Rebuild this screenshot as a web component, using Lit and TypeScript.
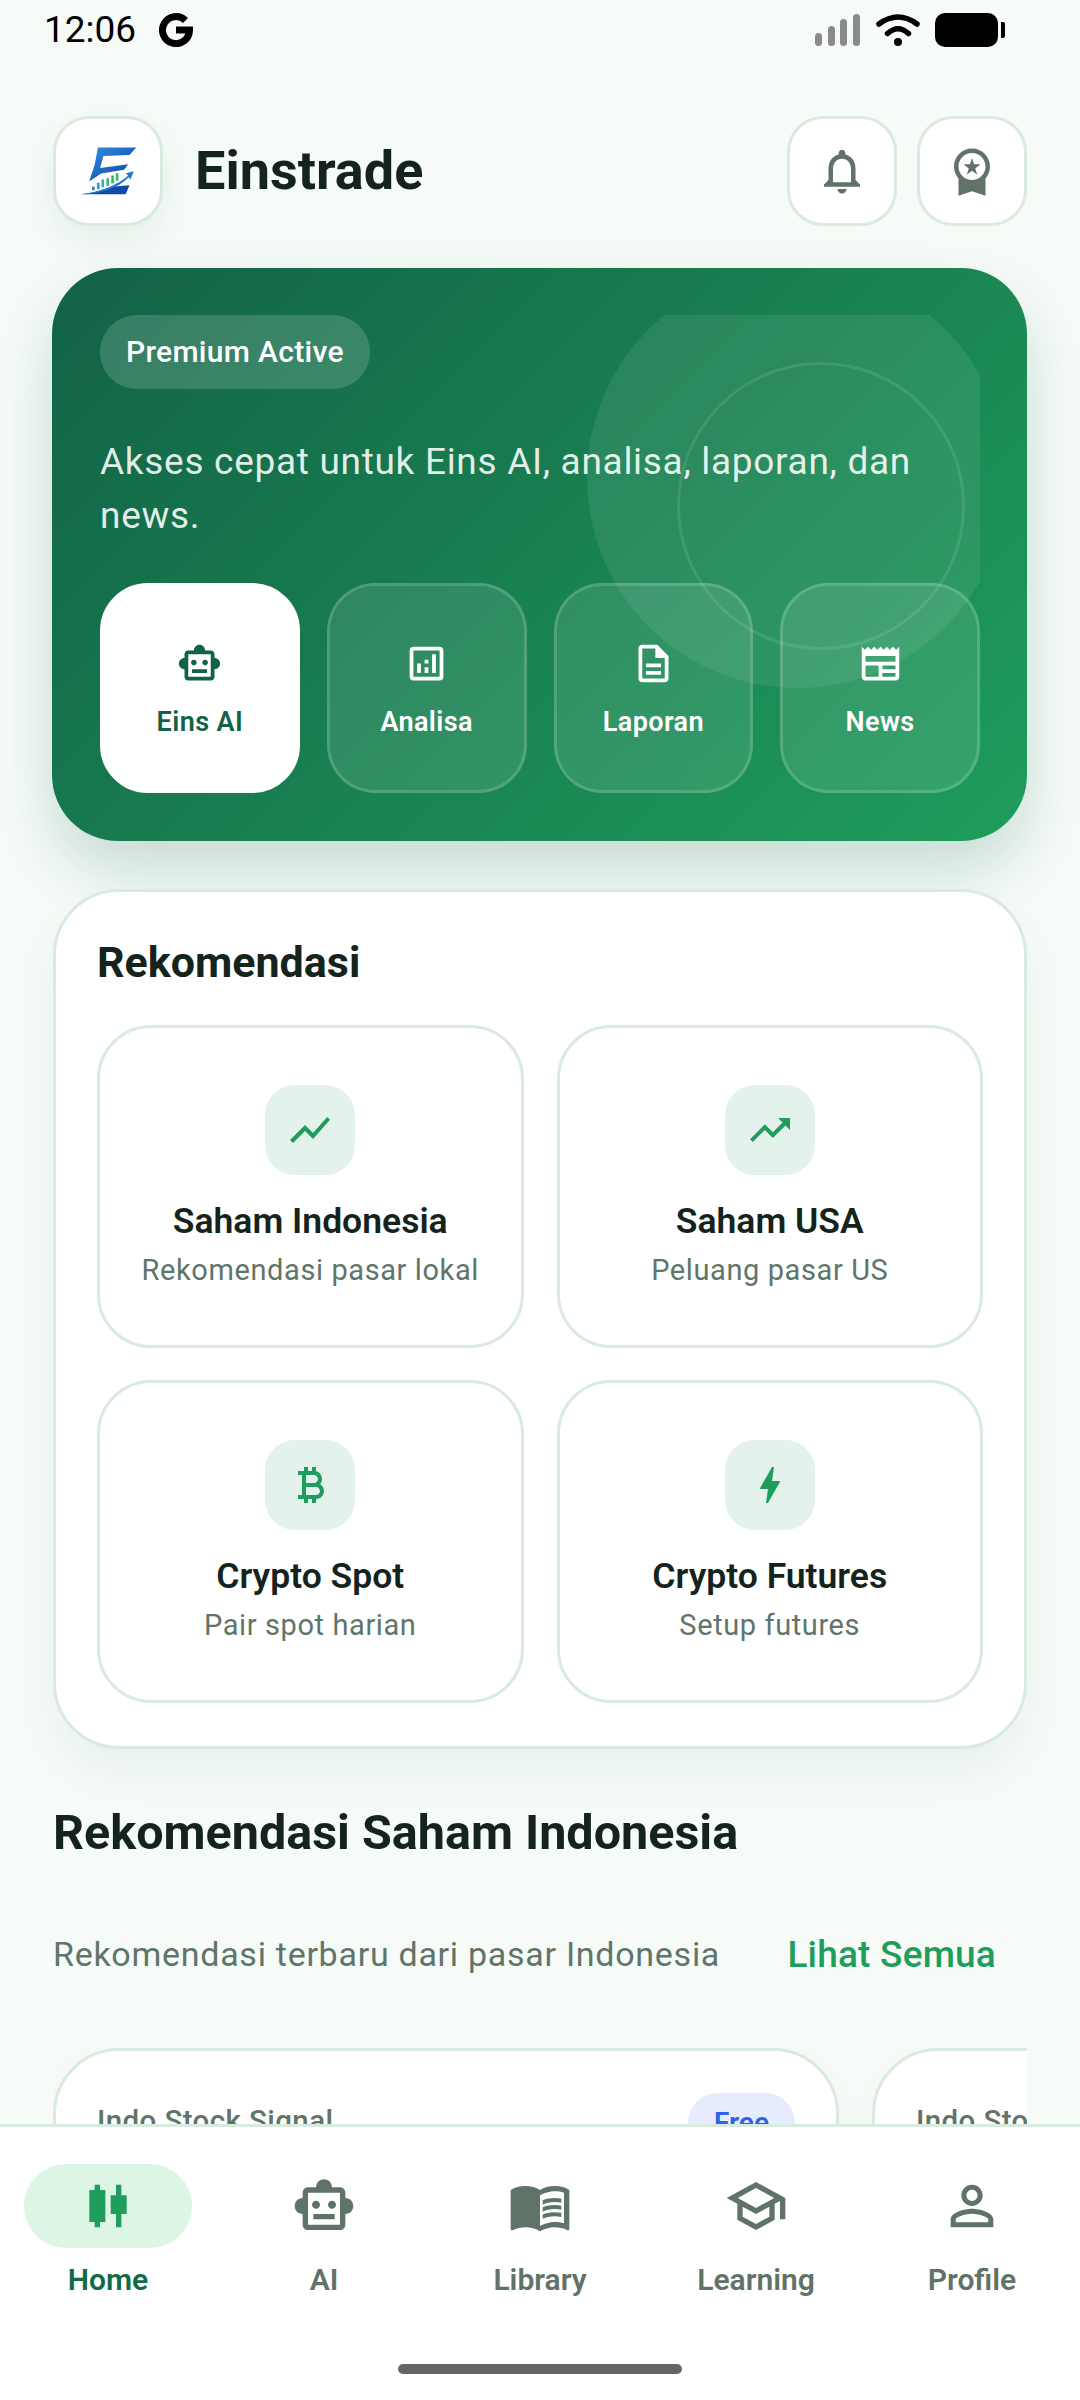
import { LitElement, html, css } from 'lit';
import { customElement } from 'lit/decorators.js';

const P = {
  robot: 'M20 9V7c0-1.1-.9-2-2-2h-3c0-1.66-1.34-3-3-3S9 3.34 9 5H6c-1.1 0-2 .9-2 2v2c-1.66 0-3 1.34-3 3s1.34 3 3 3v4c0 1.1.9 2 2 2h12c1.1 0 2-.9 2-2v-4c1.66 0 3-1.34 3-3s-1.34-3-3-3zm-2 10H6V7h12v12zm-9-6c-.83 0-1.5-.67-1.5-1.5S8.17 10 9 10s1.5.67 1.5 1.5S9.83 13 9 13zm7.5-1.5c0 .83-.67 1.5-1.5 1.5s-1.5-.67-1.5-1.5.67-1.5 1.5-1.5 1.5.67 1.5 1.5zM8 15h8v2H8v-2z',
  analytics: 'M19 3H5c-1.1 0-2 .9-2 2v14c0 1.1.9 2 2 2h14c1.1 0 2-.9 2-2V5c0-1.1-.9-2-2-2zm0 16H5V5h14v14zM7 12h2v5H7zM15 7h2v10h-2zM11 14h2v3h-2zM11 10h2v2h-2z',
  doc: 'M8 16h8v2H8zm0-4h8v2H8zm6-10H6c-1.1 0-2 .9-2 2v16c0 1.1.89 2 1.99 2H18c1.1 0 2-.9 2-2V8l-6-6zm4 18H6V4h7v5h5v11z',
  news: 'M22 3l-1.67 1.67L18.67 3 17 4.67 15.33 3l-1.66 1.67L12 3l-1.67 1.67L8.67 3 7 4.67 5.33 3 3.67 4.67 2 3v16c0 1.1.9 2 2 2h16c1.1 0 2-.9 2-2V3zM11 19H4v-6h7v6zm9 0h-7v-2h7v2zm0-4h-7v-2h7v2zm0-4H4V8h16v3z',
  bell: 'M12 22c1.1 0 2-.9 2-2h-4c0 1.1.9 2 2 2zm6-6v-5c0-3.07-1.63-5.64-4.5-6.32V4c0-.83-.67-1.5-1.5-1.5s-1.5.67-1.5 1.5v.68C7.64 5.36 6 7.92 6 11v5l-2 2v1h16v-1l-2-2zm-2 1H8v-6c0-2.48 1.51-4.5 4-4.5s4 2.02 4 4.5v6z',
  premium: 'M9.68 13.69 12 11.93l2.31 1.76-.88-2.85L15.75 9h-2.84L12 6.19 11.09 9H8.25l2.31 1.84-.88 2.85zM20 10c0-4.42-3.58-8-8-8s-8 3.58-8 8c0 2.03.76 3.87 2 5.28V23l6-2 6 2v-7.72c1.24-1.41 2-3.25 2-5.28zm-8-6c3.31 0 6 2.69 6 6s-2.69 6-6 6-6-2.69-6-6 2.69-6 6-6z',
  showChart: 'M3.5 18.49l6-6.01 4 4L22 6.92l-1.41-1.41-7.09 7.97-4-4L2 16.99z',
  trending: 'M16 6l2.29 2.29-4.88 4.88-4-4L2 16.59 3.41 18l6-6 4 4 6.3-6.29L22 12V6z',
  bitcoin: 'M17.06 11.57c.59-.69.94-1.59.94-2.57 0-1.86-1.27-3.43-3-3.87V3h-2v2h-2V3H9v2H6v2h2v10H6v2h3v2h2v-2h2v2h2v-2c2.21 0 4-1.79 4-4 0-1.45-.78-2.73-1.94-3.43zM10 7h4c1.1 0 2 .9 2 2s-.9 2-2 2h-4V7zm5 10h-5v-4h5c1.1 0 2 .9 2 2s-.9 2-2 2z',
  bolt: 'M11 21h-1l1-7H7.5c-.88 0-.33-.75-.31-.78C8.48 10.94 10.42 7.54 13.01 3h1l-1 7h3.51c.4 0 .62.19.4.66C12.97 17.55 11 21 11 21z',
  candle: 'M9 4H7v2H5v12h2v2h2v-2h2V6H9V4zm10 4h-2V4h-2v4h-2v7h2v5h2v-5h2V8z',
  book: 'M21 5c-1.11-.35-2.33-.5-3.5-.5-1.95 0-4.05.4-5.5 1.5-1.45-1.1-3.55-1.5-5.5-1.5S2.45 4.9 1 6v14.65c0 .25.25.5.5.5.1 0 .15-.05.25-.05C3.1 20.45 5.05 20 6.5 20c1.95 0 4.05.4 5.5 1.5 1.35-.85 3.8-1.5 5.5-1.5 1.65 0 3.35.3 4.75 1.05.1.05.15.05.25.05.25 0 .5-.25.5-.5V6c-.6-.45-1.25-.75-2-1zm0 13.5c-1.1-.35-2.3-.5-3.5-.5-1.7 0-4.15.65-5.5 1.5V8c1.35-.85 3.8-1.5 5.5-1.5 1.2 0 2.4.15 3.5.5v11.5zM17.5 10.5c.88 0 1.73.09 2.5.26V9.24c-.79-.15-1.64-.24-2.5-.24-1.7 0-3.24.29-4.5.83v1.66c1.13-.64 2.7-.99 4.5-.99zM13 12.49v1.66c1.13-.64 2.7-.99 4.5-.99.88 0 1.73.09 2.5.26V11.9c-.79-.15-1.64-.24-2.5-.24-1.7 0-3.24.3-4.5.83zM17.5 14.33c-1.7 0-3.24.29-4.5.83v1.66c1.13-.64 2.7-.99 4.5-.99.88 0 1.73.09 2.5.26v-1.52c-.79-.16-1.64-.24-2.5-.24z',
  school: 'M12 3L1 9l4 2.18v6L12 21l7-3.82v-6l2-1.09V17h2V9L12 3zm6.82 6L12 12.72 5.18 9 12 5.28 18.82 9zM17 15.99l-5 2.73-5-2.73v-3.72L12 15l5-2.73v3.72z',
  person: 'M12 5.9c1.16 0 2.1.94 2.1 2.1s-.94 2.1-2.1 2.1S9.9 9.16 9.9 8s.94-2.1 2.1-2.1m0 9c2.97 0 6.1 1.46 6.1 2.1v1.1H5.9V17c0-.64 3.13-2.1 6.1-2.1M12 4C9.79 4 8 5.79 8 8s1.79 4 4 4 4-1.79 4-4-1.79-4-4-4zm0 9c-2.67 0-8 1.34-8 4v3h16v-3c0-2.66-5.33-4-8-4z',
};

const icon = (d: string) => html`<svg class="ic" viewBox="0 0 24 24" fill="currentColor"><path d=${d}></path></svg>`;

const logo = html`<svg class="logo-mark" viewBox="110 138 175 152">
  <defs>
    <linearGradient id="eb" x1="0" y1="0" x2="1" y2="1">
      <stop offset="0" stop-color="#2f8fe0"></stop>
      <stop offset="1" stop-color="#0d3f9e"></stop>
    </linearGradient>
  </defs>
  <path fill="url(#eb)" d="M165 142L283 142L262 165L182 168L172 205L258 193L245 210L175 222L138 246L155 195Z"></path>
  <path fill="#0f4aa8" d="M205 262L262 258L250 285L112 285C150 282 180 275 205 262Z"></path>
  <path fill="#1e78d2" d="M112 285C170 280 230 255 258 228L250 222L275 215L265 240L260 233C225 268 170 285 112 285Z"></path>
  <rect x="147" y="262" width="8" height="11" fill="#2a7fd6"></rect>
  <rect x="162" y="250" width="8" height="20" fill="#2e94d8"></rect>
  <rect x="176" y="240" width="8" height="24" fill="#38b0a8"></rect>
  <rect x="191" y="236" width="8" height="24" fill="#3bb878"></rect>
  <rect x="206" y="228" width="8" height="24" fill="#35b565"></rect>
  <rect x="220" y="221" width="8" height="23" fill="#35b565"></rect>
</svg>`;

const quick = [
  { label: 'Eins AI', d: P.robot, active: true },
  { label: 'Analisa', d: P.analytics },
  { label: 'Laporan', d: P.doc },
  { label: 'News', d: P.news },
];

const recs = [
  { title: 'Saham Indonesia', sub: 'Rekomendasi pasar lokal', d: P.showChart },
  { title: 'Saham USA', sub: 'Peluang pasar US', d: P.trending },
  { title: 'Crypto Spot', sub: 'Pair spot harian', d: P.bitcoin },
  { title: 'Crypto Futures', sub: 'Setup futures', d: P.bolt },
];

const tabs = [
  { label: 'Home', d: P.candle, active: true },
  { label: 'AI', d: P.robot },
  { label: 'Library', d: P.book },
  { label: 'Learning', d: P.school },
  { label: 'Profile', d: P.person },
];

@customElement('app-root')
export class AppRoot extends LitElement {
  static styles = css`
    :host {
      display: flex;
      flex-direction: column;
      width: 1080px;
      height: 2400px;
      overflow: hidden;
      background: #f6fbf8;
      color: #14241c;
      font-family: Roboto, 'Noto Sans', sans-serif;
    }
    .ic { display: block; }

    .status {
      flex: none;
      height: 60px;
      display: flex;
      align-items: center;
      padding: 0 82px 0 44px;
      color: #000;
    }
    .time { font-size: 37px; line-height: 60px; }
    .g { width: 34px; height: 34px; margin-left: 23px; }
    .status-right { margin-left: auto; display: flex; align-items: center; }
    .signal { width: 45px; height: 32px; margin-right: 16px; }
    .wifi { width: 44px; height: 34px; margin-right: 15px; }
    .battery { width: 63px; height: 34px; background: #000; border-radius: 10px; position: relative; }
    .battery::after {
      content: '';
      position: absolute;
      left: 66px;
      top: 9px;
      width: 4px;
      height: 16px;
      background: #000;
      border-radius: 0 2px 2px 0;
    }

    main {
      flex: 1;
      min-height: 0;
      overflow: hidden;
      padding: 56px 53px 0 53px;
    }
    .head { display: flex; align-items: center; }
    .square {
      width: 110px;
      height: 110px;
      box-sizing: border-box;
      background: #fff;
      border: 3px solid #d9ebdf;
      border-radius: 36px;
      display: flex;
      align-items: center;
      justify-content: center;
      color: #5f7366;
    }
    .square .ic { width: 54px; height: 54px; }
    .square.brand { box-shadow: 0 15px 36px rgba(20, 90, 60, 0.07); }
    .logo-mark { width: 57px; height: 50px; }
    .brand-name {
      margin-left: 32px;
      font-size: 54px;
      font-weight: 700;
      line-height: 60px;
    }
    .head-actions { margin-left: auto; display: flex; gap: 20px; }

    .hero {
      margin: 42px 0 0 -1px;
      height: 573px;
      box-sizing: border-box;
      padding: 47px 47px 0 48px;
      border-radius: 66px;
      background: linear-gradient(135deg, #126246 0%, #1f9d5c 100%);
      box-shadow: 0 30px 60px rgba(18, 98, 70, 0.2);
    }
    .hero-inner {
      position: relative;
      overflow: hidden;
      height: 478px;
      display: flex;
      flex-direction: column;
      align-items: flex-start;
    }
    .ring-big {
      position: absolute;
      left: 487px;
      top: -47px;
      width: 420px;
      height: 420px;
      border-radius: 50%;
      background: rgba(255, 255, 255, 0.08);
    }
    .ring-small {
      position: absolute;
      left: 577px;
      top: 47px;
      width: 288px;
      height: 288px;
      box-sizing: border-box;
      border-radius: 50%;
      border: 3px solid rgba(255, 255, 255, 0.1);
    }
    .badge {
      position: relative;
      height: 74px;
      line-height: 74px;
      padding: 0 26px;
      border-radius: 37px;
      background: rgba(255, 255, 255, 0.16);
      color: #fff;
      font-size: 30px;
      font-weight: 500;
      letter-spacing: 0.3px;
    }
    .lead {
      position: relative;
      margin: 46px 0 0;
      font-size: 37px;
      line-height: 54px;
      letter-spacing: 0.7px;
      color: rgba(255, 255, 255, 0.88);
    }
    .quick {
      position: relative;
      align-self: stretch;
      margin-top: 40px;
      display: grid;
      grid-template-columns: repeat(4, 1fr);
      gap: 27px;
    }
    .q {
      height: 210px;
      box-sizing: border-box;
      padding-top: 55px;
      border-radius: 48px;
      border: 3px solid rgba(255, 255, 255, 0.16);
      background: rgba(255, 255, 255, 0.1);
      color: #fff;
      display: flex;
      flex-direction: column;
      align-items: center;
    }
    .q .ic { width: 45px; height: 45px; }
    .q span {
      margin-top: 19px;
      font-size: 27px;
      line-height: 34px;
      font-weight: 600;
      letter-spacing: 0.4px;
    }
    .q.on { background: #fff; border-color: #fff; color: #126246; }

    .panel {
      margin-top: 48px;
      height: 860px;
      box-sizing: border-box;
      padding: 45px 41px 0;
      background: #fff;
      border: 3px solid #d9ebdf;
      border-radius: 66px;
      box-shadow: 0 24px 48px rgba(20, 90, 60, 0.06);
    }
    .panel h2 {
      margin: 0;
      font-size: 43px;
      line-height: 50px;
      font-weight: 700;
    }
    .rec-grid {
      margin-top: 38px;
      display: grid;
      grid-template-columns: 1fr 1fr;
      gap: 32px 33px;
    }
    .rec {
      height: 323px;
      box-sizing: border-box;
      padding-top: 57px;
      border: 3px solid #d9ebdf;
      border-radius: 54px;
      display: flex;
      flex-direction: column;
      align-items: center;
    }
    .rec-ic {
      width: 90px;
      height: 90px;
      border-radius: 30px;
      background: #e3f2ea;
      color: #1f9d5c;
      display: flex;
      align-items: center;
      justify-content: center;
    }
    .rec-ic .ic { width: 48px; height: 48px; }
    .rec b {
      margin-top: 24px;
      font-size: 35.5px;
      line-height: 44px;
      font-weight: 600;
    }
    .rec span {
      margin-top: 7px;
      font-size: 29px;
      line-height: 40px;
      letter-spacing: 0.6px;
      color: #60756a;
    }

    .section-title {
      margin-top: 55px;
      font-size: 48.5px;
      line-height: 58px;
      font-weight: 700;
    }
    .section-row {
      margin-top: 70px;
      display: flex;
      align-items: center;
      padding-right: 31px;
    }
    .section-row .sub { font-size: 34px; line-height: 44px; letter-spacing: 0.72px; color: #60756a; }
    .section-row a { margin-left: auto; font-size: 37px; font-weight: 500; letter-spacing: 0.2px; color: #1f9d5c; }

    .stocks {
      margin-top: 72px;
      display: flex;
      gap: 33px;
      width: 974px;
      overflow: hidden;
    }
    .stock {
      flex: none;
      width: 786px;
      height: 400px;
      box-sizing: border-box;
      padding: 42px 41px;
      background: #fff;
      border: 3px solid #d9ebdf;
      border-radius: 66px;
      box-shadow: 0 10px 30px rgba(20, 90, 60, 0.05);
      display: flex;
      justify-content: space-between;
      align-items: flex-start;
    }
    .stock .name {
      margin-top: 10px;
      font-size: 29.5px;
      line-height: 36px;
      font-weight: 500;
      letter-spacing: 0.4px;
      color: #5f7568;
    }
    .free {
      height: 60px;
      line-height: 60px;
      padding: 0 26px;
      border-radius: 30px;
      background: #e6ecfd;
      color: #2d62ea;
      font-size: 28px;
      font-weight: 600;
    }

    nav {
      flex: none;
      height: 276px;
      box-sizing: border-box;
      background: #fff;
      border-top: 3px solid #d9ebdf;
      display: flex;
      flex-direction: column;
      position: relative;
    }
    .tabs { display: grid; grid-template-columns: repeat(5, 1fr); padding-top: 37px; }
    .tab {
      display: flex;
      flex-direction: column;
      align-items: center;
      color: #5f7366;
    }
    .pill {
      width: 168px;
      height: 84px;
      border-radius: 42px;
      display: flex;
      align-items: center;
      justify-content: center;
    }
    .pill .ic { width: 64px; height: 64px; }
    .tab span {
      margin-top: 14px;
      font-size: 30px;
      line-height: 36px;
      font-weight: 600;
    }
    .tab.on { color: #136a48; }
    .tab.on .pill { background: #dcf5e5; color: #1f9d5c; }
    .home-bar {
      width: 284px;
      height: 10px;
      margin: auto auto 26px;
      border-radius: 5px;
      background: #666;
    }
  `;

  render() {
    return html`
      <div class="status">
        <span class="time">12:06</span>
        <svg class="g" viewBox="0 0 34 34" fill="none" stroke="#000" stroke-width="7">
          <path d="M26.5 7.5A13.5 13.5 0 1 0 30.5 17H17"></path>
        </svg>
        <div class="status-right">
          <svg class="signal" viewBox="0 0 45 32" fill="#8a8a8a">
            <rect x="0" y="19" width="7" height="13" rx="3.5"></rect>
            <rect x="13" y="12" width="7" height="20" rx="3.5"></rect>
            <rect x="25" y="5" width="7" height="27" rx="3.5"></rect>
            <rect x="38" y="0" width="7" height="32" rx="3.5"></rect>
          </svg>
          <svg class="wifi" viewBox="0 0 44 34" fill="none" stroke="#000" stroke-width="5.5" stroke-linecap="round">
            <path d="M3 11Q22 -3 41 11"></path>
            <path d="M11.5 20.5Q22 11 32.5 20.5"></path>
            <circle cx="22" cy="29" r="4" fill="#000" stroke="none"></circle>
          </svg>
          <div class="battery"></div>
        </div>
      </div>

      <main>
        <header class="head">
          <div class="square brand">${logo}</div>
          <div class="brand-name">Einstrade</div>
          <div class="head-actions">
            <div class="square">${icon(P.bell)}</div>
            <div class="square">${icon(P.premium)}</div>
          </div>
        </header>

        <section class="hero">
          <div class="hero-inner">
            <div class="ring-big"></div>
            <div class="ring-small"></div>
            <div class="badge">Premium Active</div>
            <p class="lead">Akses cepat untuk Eins AI, analisa, laporan, dan news.</p>
            <div class="quick">
              ${quick.map(
                (q) => html`<div class="q ${q.active ? 'on' : ''}">${icon(q.d)}<span>${q.label}</span></div>`
              )}
            </div>
          </div>
        </section>

        <section class="panel">
          <h2>Rekomendasi</h2>
          <div class="rec-grid">
            ${recs.map(
              (r) => html`<div class="rec">
                <div class="rec-ic">${icon(r.d)}</div>
                <b>${r.title}</b>
                <span>${r.sub}</span>
              </div>`
            )}
          </div>
        </section>

        <div class="section-title">Rekomendasi Saham Indonesia</div>
        <div class="section-row">
          <span class="sub">Rekomendasi terbaru dari pasar Indonesia</span>
          <a>Lihat Semua</a>
        </div>

        <div class="stocks">
          <div class="stock"><span class="name">Indo Stock Signal</span><span class="free">Free</span></div>
          <div class="stock"><span class="name">Indo Stock Signal</span><span class="free">Free</span></div>
        </div>
      </main>

      <nav>
        <div class="tabs">
          ${tabs.map(
            (t) => html`<div class="tab ${t.active ? 'on' : ''}">
              <div class="pill">${icon(t.d)}</div>
              <span>${t.label}</span>
            </div>`
          )}
        </div>
        <div class="home-bar"></div>
      </nav>
    `;
  }
}
